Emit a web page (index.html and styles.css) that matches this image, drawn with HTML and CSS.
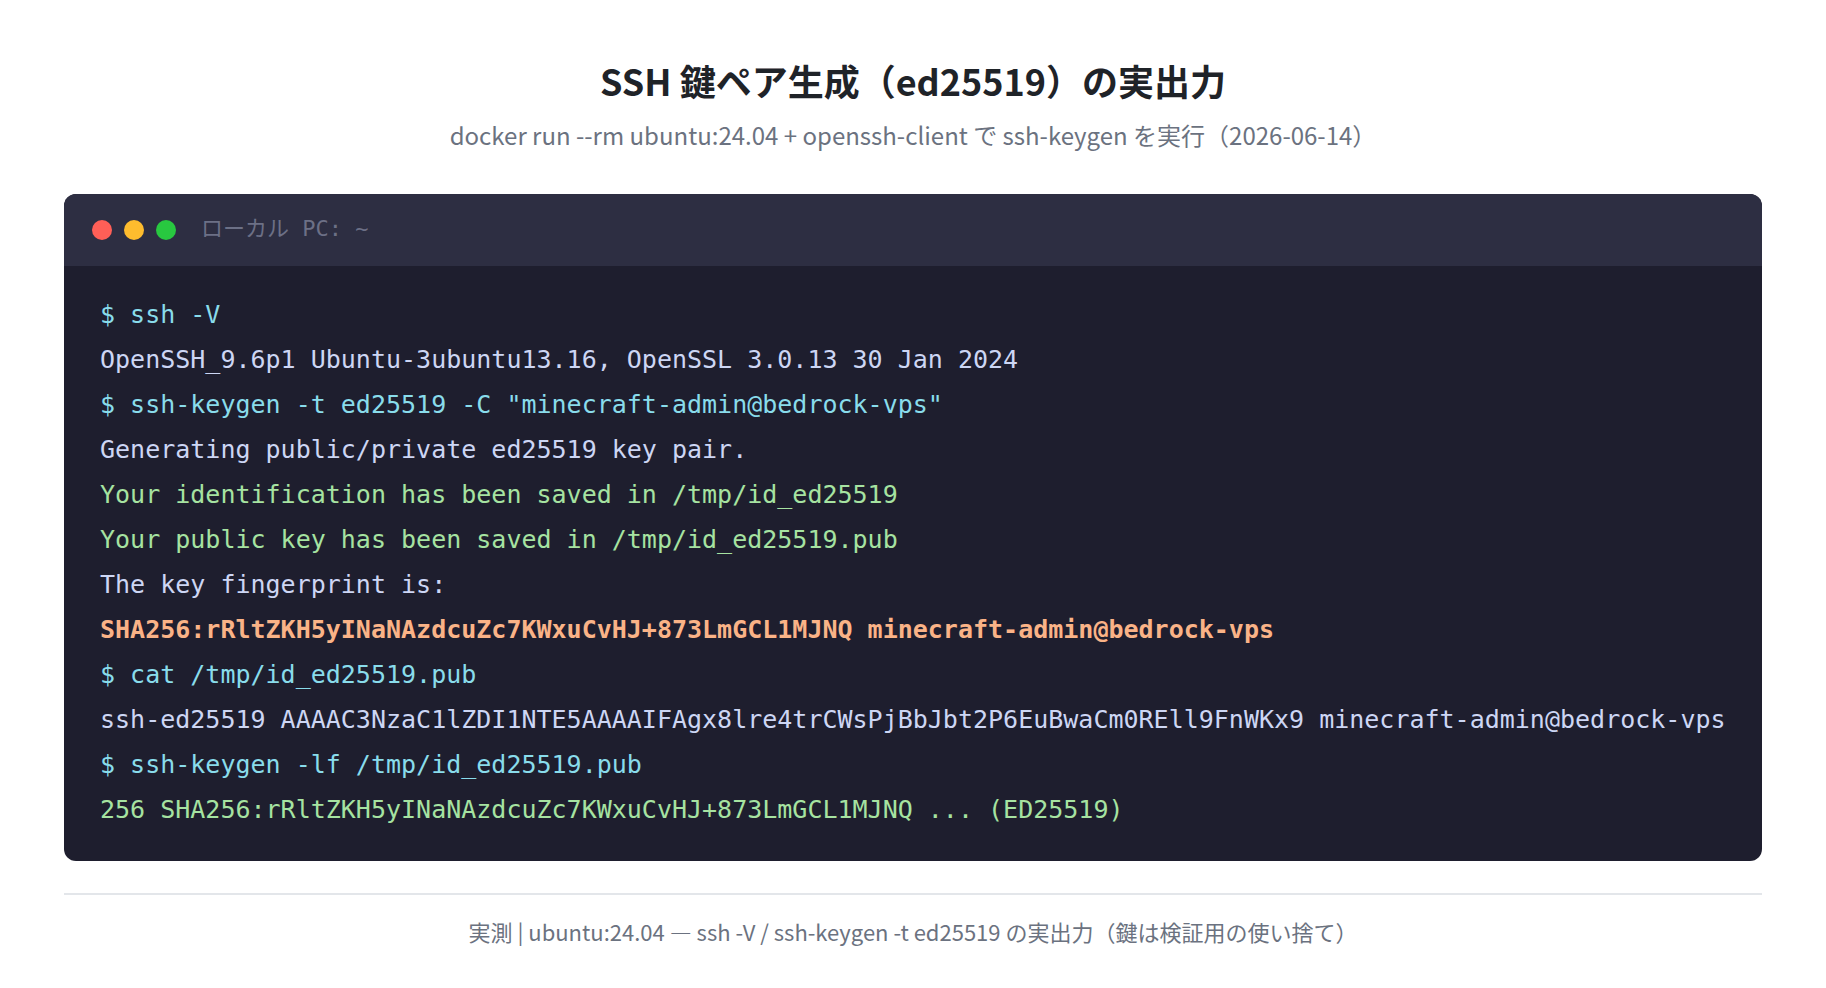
FILE: index.html
```html
<!DOCTYPE html>
<html lang="ja">
<head>
<meta charset="utf-8">
<title>SSH 鍵ペア生成（ed25519）の実出力</title>
<link rel="stylesheet" href="styles.css">
</head>
<body>
<main class="page">
  <header class="head">
    <h1 class="title">SSH 鍵ペア生成（ed25519）の実出力</h1>
    <p class="subtitle">docker run --rm ubuntu:24.04 + openssh-client で ssh-keygen を実行（2026-06-14）</p>
  </header>
  <section class="term">
    <div class="term-bar">
      <span class="dot dot-red"></span>
      <span class="dot dot-yellow"></span>
      <span class="dot dot-green"></span>
      <span class="term-title">ローカル PC: ~</span>
    </div>
    <div class="term-body">
      <div class="line cmd">$ ssh -V</div>
      <div class="line out">OpenSSH_9.6p1 Ubuntu-3ubuntu13.16, OpenSSL 3.0.13 30 Jan 2024</div>
      <div class="line cmd">$ ssh-keygen -t ed25519 -C "minecraft-admin@bedrock-vps"</div>
      <div class="line out">Generating public/private ed25519 key pair.</div>
      <div class="line ok">Your identification has been saved in /tmp/id_ed25519</div>
      <div class="line ok">Your public key has been saved in /tmp/id_ed25519.pub</div>
      <div class="line out">The key fingerprint is:</div>
      <div class="line hl">SHA256:rRltZKH5yINaNAzdcuZc7KWxuCvHJ+873LmGCL1MJNQ minecraft-admin@bedrock-vps</div>
      <div class="line cmd">$ cat /tmp/id_ed25519.pub</div>
      <div class="line out">ssh-ed25519 AAAAC3NzaC1lZDI1NTE5AAAAIFAgx8lre4trCWsPjBbJbt2P6EuBwaCm0REll9FnWKx9 minecraft-admin@bedrock-vps</div>
      <div class="line cmd">$ ssh-keygen -lf /tmp/id_ed25519.pub</div>
      <div class="line ok">256 SHA256:rRltZKH5yINaNAzdcuZc7KWxuCvHJ+873LmGCL1MJNQ ... (ED25519)</div>
    </div>
  </section>
  <footer class="foot">
    <p class="foot-text">実測 | ubuntu:24.04 — ssh -V / ssh-keygen -t ed25519 の実出力（鍵は検証用の使い捨て）</p>
  </footer>
</main>
</body>
</html>
```

FILE: styles.css
```css
* { box-sizing: border-box; }
html, body { margin: 0; padding: 0; background: #ffffff; }
body {
  font-family: "Noto Sans CJK JP", "Noto Sans", sans-serif;
  color: #1f2328;
}
.page {
  display: flex;
  flex-direction: column;
  padding: 55px 64px 0;
}
.head {
  display: flex;
  flex-direction: column;
  align-items: center;
}
.title {
  margin: 0;
  font-size: 36px;
  line-height: 50px;
  font-weight: 700;
  color: #1f2328;
}
.subtitle {
  margin: 14px 0 0;
  font-size: 24px;
  line-height: 32px;
  color: #6b7280;
}
.term {
  margin-top: 43px;
  border-radius: 12px;
  overflow: hidden;
  background: #1e1e2e;
}
.term-bar {
  height: 72px;
  background: #2d2e42;
  display: flex;
  align-items: center;
  padding: 0 28px;
  gap: 12px;
}
.dot {
  width: 20px;
  height: 20px;
  border-radius: 50%;
  flex: none;
}
.dot-red { background: #ff5f57; }
.dot-yellow { background: #febc2e; }
.dot-green { background: #28c840; }
.term-title {
  margin-left: 13px;
  margin-bottom: 2px;
  font-family: "DejaVu Sans Mono", "Noto Sans CJK JP", monospace;
  font-size: 22px;
  line-height: 30px;
  color: #6c7086;
  white-space: pre;
}
.term-body {
  padding: 26px 36px 29px;
  font-family: "DejaVu Sans Mono", "Noto Sans CJK JP", monospace;
  font-size: 25px;
  line-height: 45px;
}
.line { color: #cdd6f4; white-space: pre; }
.cmd { color: #89dceb; }
.ok { color: #a6e3a1; }
.hl { color: #fab387; font-weight: 700; }
.foot {
  margin-top: 32px;
  border-top: 2px solid #e3e6ea;
  display: flex;
  justify-content: center;
}
.foot-text {
  margin: 21px 0 0;
  font-size: 22px;
  line-height: 30px;
  color: #6b7280;
}
```
